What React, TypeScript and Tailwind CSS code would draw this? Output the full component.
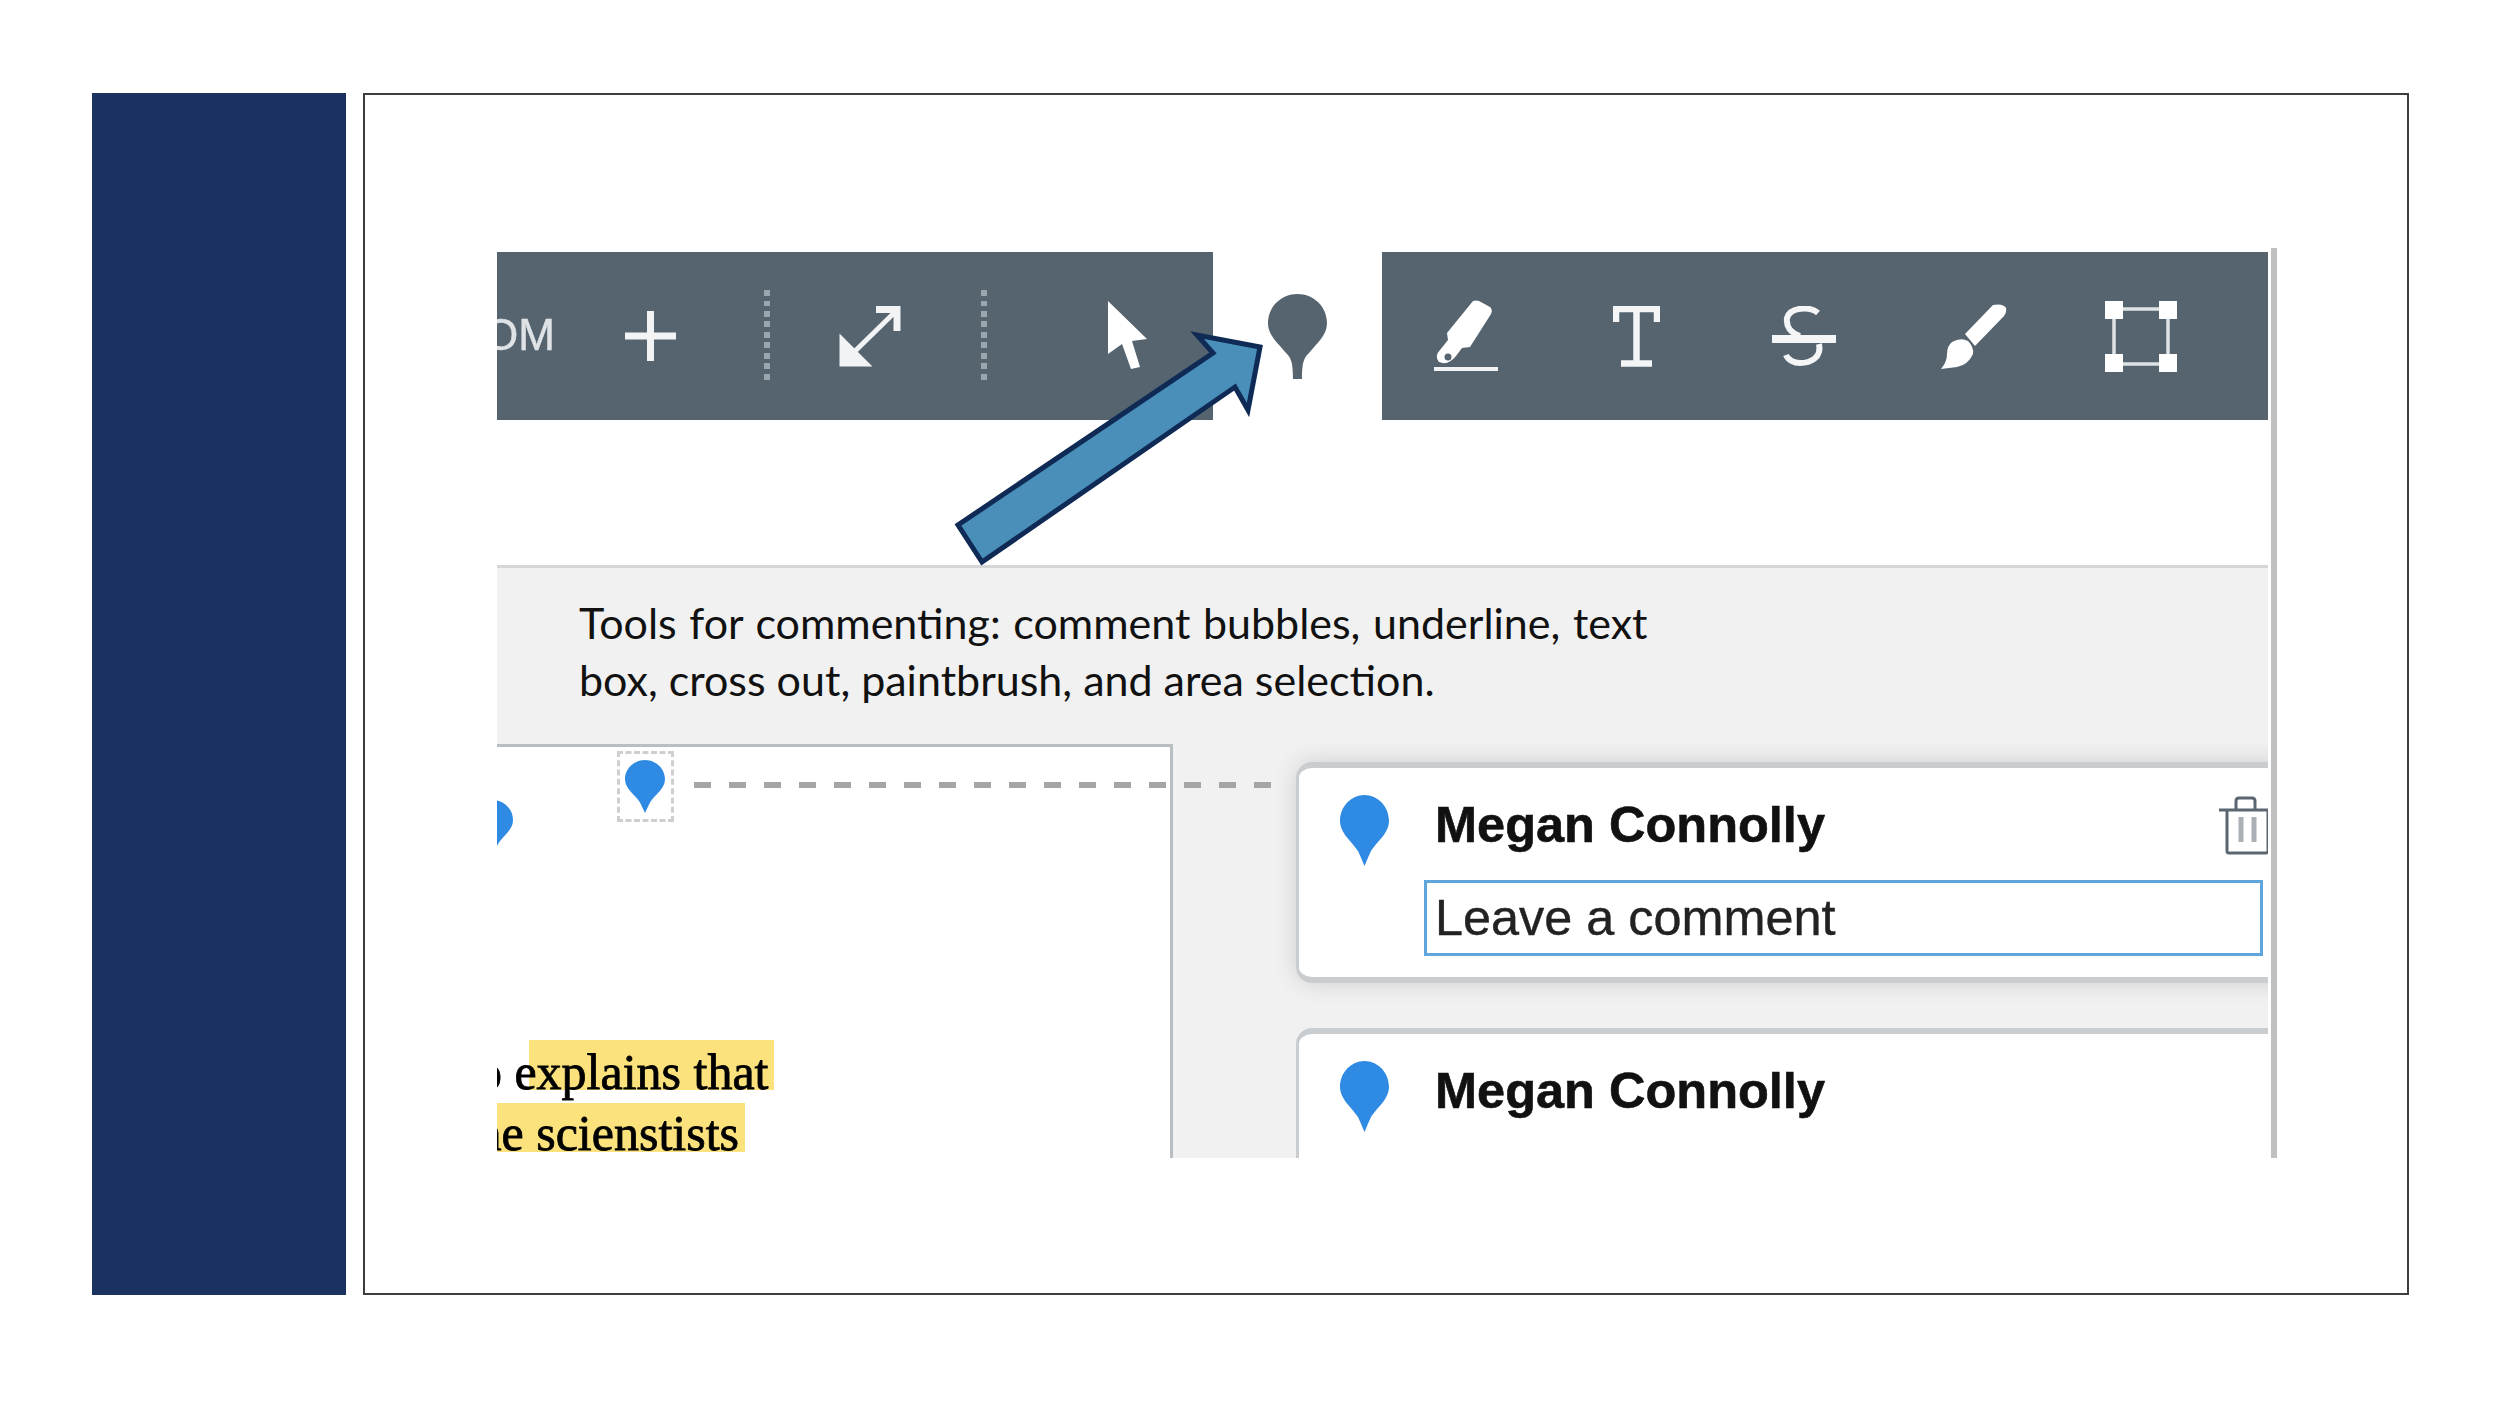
import React from "react";

const Pin = ({ className }: { className: string }) => (
    <svg viewBox="0 0 40 55" className={className} preserveAspectRatio="none">
        <path d="M20 0C31 0 40 9 40 20C40 30 30 36 25 44C23 48 22 51 20 55C18 51 17 48 15 44C10 36 0 30 0 20C0 9 9 0 20 0Z" fill="#2f8ae3" />
    </svg>
);

const Dots = ({ className }: { className: string }) => (
    <div className={`w-[6px] h-[92px] shrink-0 bg-[repeating-linear-gradient(180deg,#9aa5ae_0_6px,transparent_6px_10.5px)] ${className}`} />
);

const Toolbar = () => (
    <div className="flex h-[168px] blur-[0.7px]">
        <div className="flex items-center w-[716px] bg-[#56646f] overflow-hidden">
            <div className="flex justify-end w-[58px] shrink-0 whitespace-nowrap font-['Liberation_Sans',sans-serif] text-[44px] leading-[44px] text-[#dfe3e6] [-webkit-text-stroke:0.5px_#dfe3e6] -mt-[2px]">ZOOM</div>
            <svg viewBox="0 0 51 50" className="w-[51px] h-[50px] ml-[70px] shrink-0">
                <path d="M25.5 0V50M0 25H51" stroke="#f1f3f4" strokeWidth="7" fill="none" />
            </svg>
            <Dots className="ml-[88px]" />
            <svg viewBox="0 0 62 61" className="w-[62px] h-[61px] ml-[69px] shrink-0">
                <path d="M7 54L55 7" stroke="#f1f3f4" strokeWidth="5" fill="none" />
                <path d="M37 3.5H58V25" stroke="#f1f3f4" strokeWidth="7" fill="none" />
                <path d="M4 36V57H25Z" stroke="#f1f3f4" strokeWidth="7" fill="#f1f3f4" />
            </svg>
            <Dots className="ml-[80px]" />
            <svg viewBox="0 0 40 70" className="w-[40px] h-[70px] ml-[121px] shrink-0">
                <path d="M0 0V53L14 43L23 68L32 66L24 40L39 38Z" fill="#ffffff" />
            </svg>
        </div>
        <div className="flex items-center justify-center w-[169px]">
            <svg viewBox="0 0 59 85" className="w-[59px] h-[85px]">
                <path d="M29.5 0C46 0 59 13 59 29C59 42 48 50 41 59C36 64 34 68 34 85H25C25 68 23 64 18 59C11 50 0 42 0 29C0 13 13 0 29.5 0Z" fill="#56646f" />
            </svg>
        </div>
        <div className="flex items-center w-[886px] bg-[#56646f]">
            <svg viewBox="0 0 64 72" className="w-[64px] h-[72px] ml-[52px] shrink-0">
                <path d="M45 1L56 7Q59 10 57 14L36 47L28 48L22 56Q14 66 5 62Q0 56 6 50L14 40L13 33L39 1Q42 0 45 1Z" fill="#ffffff" />
                <circle cx="14" cy="57" r="3.5" fill="#56646f" />
                <rect x="0" y="67" width="64" height="4" fill="#f1f3f4" />
            </svg>
            <svg viewBox="0 0 47 61" className="w-[47px] h-[61px] ml-[115px] shrink-0">
                <path d="M3 16V3H44V16M23.5 3V57M8 57.5H39" stroke="#f4f5f6" strokeWidth="6.5" fill="none" />
            </svg>
            <svg viewBox="0 0 64 60" className="w-[64px] h-[60px] ml-[112px] shrink-0">
                <path d="M46 7C38 0 18 1 15 12C14 20 18 27 28 30" stroke="#f4f5f6" strokeWidth="6" fill="none" />
                <path d="M47 38C50 52 38 57 28 57C22 57 16 54 14 49" stroke="#f4f5f6" strokeWidth="6" fill="none" />
                <rect x="0" y="29" width="64" height="8" fill="#f4f5f6" />
            </svg>
            <svg viewBox="0 0 66 65" className="w-[66px] h-[65px] ml-[105px] shrink-0">
                <path d="M52 1Q62 -1 65 4Q66 8 63 12L34 42L24 30Z" fill="#ffffff" />
                <path d="M11 38Q20 33 27 37Q33 43 32 50Q27 61 16 63L0 65Q6 58 6 50Q6 42 11 38Z" fill="#ffffff" />
            </svg>
            <svg viewBox="0 0 72 71" className="w-[72px] h-[71px] ml-[98px] shrink-0">
                <rect x="9" y="8" width="54" height="55" stroke="#dfe3e6" strokeWidth="3.5" fill="none" />
                <rect x="0" y="0" width="18" height="18" fill="#ffffff" />
                <rect x="54" y="0" width="18" height="18" fill="#ffffff" />
                <rect x="0" y="53" width="18" height="18" fill="#ffffff" />
                <rect x="54" y="53" width="18" height="18" fill="#ffffff" />
            </svg>
        </div>
    </div>
);

const Doc = () => (
    <div className="relative w-[676px] shrink-0 border-t-[3px] border-r-[3px] border-[#b9bec2] bg-white overflow-hidden pt-[293px] font-['Liberation_Serif',serif] text-[50px] leading-[50px] text-[#000000] [-webkit-text-stroke:0.8px_#000000]">
        <Pin className="absolute left-[-24px] top-[53px] w-[40px] h-[55px]" />
        <div className="absolute left-[120px] top-[4px] w-[57px] h-[71px] border-[3px] border-dashed border-[#cfcfcf] pl-[5px] pt-[6px]">
            <Pin className="w-[40px] h-[53px]" />
        </div>
        <div className="relative h-[63px] whitespace-nowrap">
            <div className="absolute left-[32px] top-0 w-[245px] h-[50px] bg-[#fbe27c]" />
            <span className="absolute left-[-34px] top-[7px]">to explains that</span>
        </div>
        <div className="flex justify-end w-[248px] h-[49px] pr-[6px] pt-[5px] bg-[#fbe27c] whitespace-nowrap">the scienstists</div>
    </div>
);

const Card = ({ first }: { first?: boolean }) => (
    <div className={`flex w-[1000px] h-[221px] shrink-0 pl-[41px] rounded-[16px] border-l-[3px] border-t-[6px] border-b-[6px] border-[#c9cdd0] bg-white ${first ? "shadow-[0_0_24px_rgba(0,0,0,0.14)]" : ""}`}>
        <Pin className="w-[49px] h-[71px] mt-[27px] shrink-0" />
        <div className="w-[844px] ml-[35px] shrink-0">
            <div className="flex items-start justify-between h-[112px] pt-[32px] pl-[11px] font-['Liberation_Sans',sans-serif] text-[50.5px] leading-[50px] font-bold text-[#111111] [-webkit-text-stroke:0.6px_#111111]">
                <span>Megan Connolly</span>
                {first && (
                    <svg viewBox="0 0 49 60" className="w-[49px] h-[60px] -mt-[4px] shrink-0">
                        <path d="M0 14H49M17 13V5Q17 2 20 2H33Q36 2 36 5V13M8 15V55Q8 57 10 57H47Q49 57 49 55V15" stroke="#5b6670" strokeWidth="3" fill="none" />
                        <path d="M22 21V46M35 21V46" stroke="#aab0b5" strokeWidth="5" fill="none" />
                    </svg>
                )}
            </div>
            {first && (
                <div className="flex items-center w-[839px] h-[76px] pl-[8px] border-[3px] border-[#5ea6dc] font-['Liberation_Sans',sans-serif] text-[50.4px] leading-[50px] text-[#222222] [-webkit-text-stroke:0.4px_#222222]">Leave a comment</div>
            )}
        </div>
    </div>
);

export default function App() {
    return (
        <div className="flex w-[2500px] h-[1406px] pt-[93px] pl-[92px] bg-white">
            <div className="w-[254px] h-[1202px] bg-[#1b3160]" />
            <div className="w-[2046px] h-[1202px] ml-[17px] pt-[153px] pl-[132px] border-2 border-[#3d3d3d]">
                <div className="relative w-[1780px] h-[910px] pt-[4px] pr-[3px] border-r-[6px] border-[#c0c0c0] overflow-hidden">
                    <Toolbar />
                    <div className="flex flex-col h-[593px] mt-[145px] border-t-[3px] border-[#d6d6d6] bg-[#f1f1f1]">
                        <div className="h-[176px] pl-[82px] pt-[26px] font-['Lato',sans-serif] text-[43px] leading-[57px] text-[#111111]">
                            <p className="[word-spacing:1.6px]">Tools for commenting: comment bubbles, underline, text</p>
                            <p>box, cross out, paintbrush, and area selection.</p>
                        </div>
                        <div className="relative flex flex-1 min-h-0 blur-[0.7px]">
                            <Doc />
                            <div className="flex flex-col gap-[45px] flex-1 min-w-0 pt-[18px] pl-[123px] overflow-hidden">
                                <Card first />
                                <Card />
                            </div>
                            <div className="absolute left-[197px] top-[38px] w-[578px] h-[6px] bg-[repeating-linear-gradient(90deg,#a5a5a5_0_17px,transparent_17px_35px)]" />
                        </div>
                    </div>
                    <svg viewBox="0 0 320 245" className="absolute left-[453px] top-[77px] w-[320px] h-[245px]">
                        <path d="M310 22L247 10L263 28L8 200L32 237L285 62L298 85Z" fill="#4a8fba" stroke="#0e2a55" strokeWidth="5" />
                    </svg>
                </div>
            </div>
        </div>
    );
}
